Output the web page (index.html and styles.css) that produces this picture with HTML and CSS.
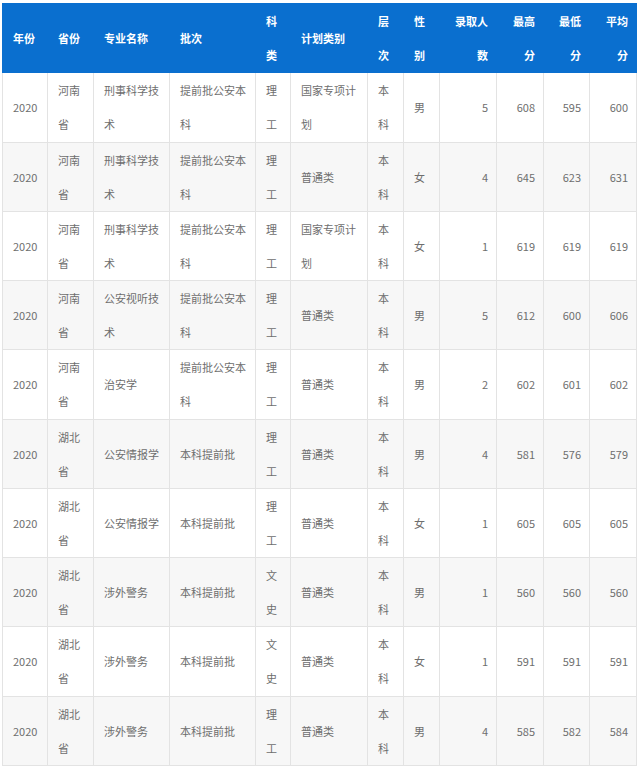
FILE: index.html
```html
<!DOCTYPE html>
<html lang="zh">
<head>
<meta charset="utf-8">
<title>录取分数</title>
<link rel="stylesheet" href="styles.css">
</head>
<body>
<table class="score-table">
  <colgroup>
    <col class="c1"><col class="c2"><col class="c3"><col class="c4"><col class="c5"><col class="c6">
    <col class="c7"><col class="c8"><col class="c9"><col class="c10"><col class="c11"><col class="c12">
  </colgroup>
  <thead>
    <tr>
      <th>年份</th><th>省份</th><th>专业名称</th><th>批次</th><th>科类</th><th>计划类别</th>
      <th>层次</th><th>性别</th><th class="num">录取人数</th><th class="num">最高分</th><th class="num">最低分</th><th class="num">平均分</th>
    </tr>
  </thead>
  <tbody>
    <tr><td>2020</td><td>河南省</td><td>刑事科学技术</td><td>提前批公安本科</td><td>理工</td><td>国家专项计划</td><td>本科</td><td>男</td><td class="num">5</td><td class="num">608</td><td class="num">595</td><td class="num">600</td></tr>
    <tr><td>2020</td><td>河南省</td><td>刑事科学技术</td><td>提前批公安本科</td><td>理工</td><td>普通类</td><td>本科</td><td>女</td><td class="num">4</td><td class="num">645</td><td class="num">623</td><td class="num">631</td></tr>
    <tr><td>2020</td><td>河南省</td><td>刑事科学技术</td><td>提前批公安本科</td><td>理工</td><td>国家专项计划</td><td>本科</td><td>女</td><td class="num">1</td><td class="num">619</td><td class="num">619</td><td class="num">619</td></tr>
    <tr><td>2020</td><td>河南省</td><td>公安视听技术</td><td>提前批公安本科</td><td>理工</td><td>普通类</td><td>本科</td><td>男</td><td class="num">5</td><td class="num">612</td><td class="num">600</td><td class="num">606</td></tr>
    <tr><td>2020</td><td>河南省</td><td>治安学</td><td>提前批公安本科</td><td>理工</td><td>普通类</td><td>本科</td><td>男</td><td class="num">2</td><td class="num">602</td><td class="num">601</td><td class="num">602</td></tr>
    <tr><td>2020</td><td>湖北省</td><td>公安情报学</td><td>本科提前批</td><td>理工</td><td>普通类</td><td>本科</td><td>男</td><td class="num">4</td><td class="num">581</td><td class="num">576</td><td class="num">579</td></tr>
    <tr><td>2020</td><td>湖北省</td><td>公安情报学</td><td>本科提前批</td><td>理工</td><td>普通类</td><td>本科</td><td>女</td><td class="num">1</td><td class="num">605</td><td class="num">605</td><td class="num">605</td></tr>
    <tr><td>2020</td><td>湖北省</td><td>涉外警务</td><td>本科提前批</td><td>文史</td><td>普通类</td><td>本科</td><td>男</td><td class="num">1</td><td class="num">560</td><td class="num">560</td><td class="num">560</td></tr>
    <tr><td>2020</td><td>湖北省</td><td>涉外警务</td><td>本科提前批</td><td>文史</td><td>普通类</td><td>本科</td><td>女</td><td class="num">1</td><td class="num">591</td><td class="num">591</td><td class="num">591</td></tr>
    <tr><td>2020</td><td>湖北省</td><td>涉外警务</td><td>本科提前批</td><td>理工</td><td>普通类</td><td>本科</td><td>男</td><td class="num">4</td><td class="num">585</td><td class="num">582</td><td class="num">584</td></tr>
  </tbody>
</table>
</body>
</html>
```
FILE: styles.css
```css
html, body {
  margin: 0;
  padding: 0;
  background: #ffffff;
}
body {
  padding: 3px 0 0 2px;
  font-family: "Noto Sans CJK SC", "Noto Sans", sans-serif;
  font-size: 11px;
}
.score-table {
  border-collapse: collapse;
  table-layout: fixed;
  width: 634px;
}
.c1 { width: 45px; }
.c2 { width: 46px; }
.c3 { width: 76px; }
.c4 { width: 86px; }
.c5 { width: 35px; }
.c6 { width: 77px; }
.c7 { width: 36px; }
.c8 { width: 36px; }
.c9 { width: 57px; }
.c10 { width: 47px; }
.c11 { width: 46px; }
.c12 { width: 47px; }
.score-table th,
.score-table td {
  line-height: 34.12px;
  padding: 0 4px 0 10px;
  text-align: left;
  vertical-align: middle;
  word-break: break-all;
}
.score-table th {
  background: #0a6fcf;
  color: #ffffff;
  font-weight: bold;
  border: 1px solid #0a6fcf;
}
.score-table td {
  color: #6e6e6e;
  border: 1px solid #e3e3e3;
}
.score-table tbody tr:nth-child(even) td {
  background: #f7f7f7;
}
.score-table th.num,
.score-table td.num {
  text-align: right;
  padding: 0 8px 0 8px;
}
```
